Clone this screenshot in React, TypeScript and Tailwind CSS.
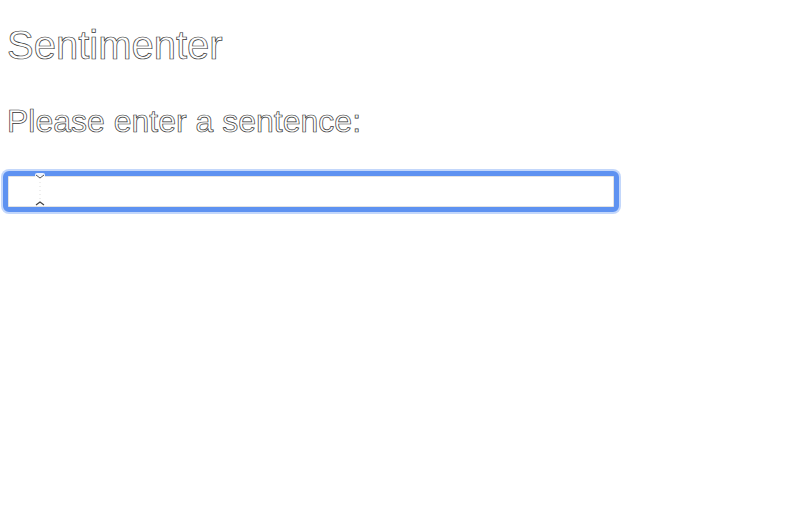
export default function App() {
  const outline = "text-white [-webkit-text-stroke:0.7px_#333333]";
  return (
    <div className="min-h-[508px] bg-white px-[7px] font-['Liberation_Sans',Arial,sans-serif]">
      <h1 className={`pt-[22px] text-[40px] leading-[46px] font-normal ${outline}`}>Sentimenter</h1>
      <p className={`mt-[35px] text-[32px] leading-[37px] ${outline}`}>Please enter a sentence:</p>
      <div className="relative mt-[31px] ml-[-4px] w-[616px]">
        <div className="h-[41px] rounded-[6px] border-[5px] border-[#5e92f1] bg-white shadow-[0_0_0_2px_#c3d7fb,inset_0_0_0_1px_#e3e3e3]" />
        <svg className="absolute left-[30px] top-[1px]" width="14" height="36" viewBox="0 0 14 36">
          <rect x="2" y="1" width="10" height="5" rx="2" fill="#ffffff" opacity="0.9" />
          <path d="M3 3 L7 6 L11 3" fill="none" stroke="#555" strokeWidth="1" />
          <line x1="7" y1="6" x2="7" y2="30" stroke="#ddd" strokeWidth="1" strokeDasharray="1 3" />
          <path d="M3 33 L7 30 L11 33" fill="none" stroke="#444" strokeWidth="1.2" />
        </svg>
      </div>
    </div>
  );
}
